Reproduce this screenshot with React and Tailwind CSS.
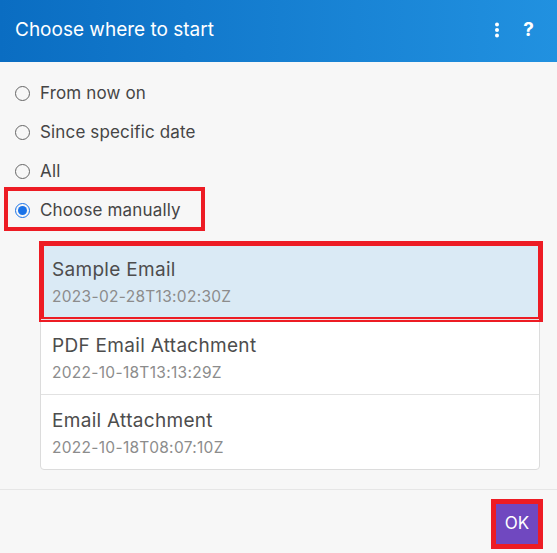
import { useState } from "react";

const options = ["From now on", "Since specific date", "All", "Choose manually"];

const items = [
  { title: "Sample Email", date: "2023-02-28T13:02:30Z" },
  { title: "PDF Email Attachment", date: "2022-10-18T13:13:29Z" },
  { title: "Email Attachment", date: "2022-10-18T08:07:10Z" },
];

const App = () => {
  const [choice, setChoice] = useState(3);
  const [picked, setPicked] = useState(0);

  return (
    <div
      className="w-[557px] h-[553px] bg-[#f7f7f7] flex flex-col overflow-hidden"
      style={{ fontFamily: "Inter, 'Noto Sans', sans-serif" }}
    >
      {/* Header */}
      <div className="h-[62px] shrink-0 flex items-center justify-between pl-[15px] pr-[23px] bg-gradient-to-r from-[#0a6dc2] to-[#2191e0] text-white">
        <h1 className="text-[19px] font-normal pb-[2px]">Choose where to start</h1>
        <div className="flex items-center gap-[23px] pb-[3px]">
          <svg width="6" height="16" viewBox="0 0 6 16" fill="white">
            <circle cx="3" cy="2.5" r="2" />
            <circle cx="3" cy="8" r="2" />
            <circle cx="3" cy="13.5" r="2" />
          </svg>
          <span className="text-[19px] font-bold leading-none">?</span>
        </div>
      </div>

      {/* Options */}
      <div className="pt-[12px] flex flex-col">
        {options.map((label, i) => (
          <div key={label} className="relative h-[39px] flex items-center">
            <label
              className="flex items-center gap-[10px] pl-[15px] cursor-pointer text-[17px] tracking-[0.15px] text-[#454545]"
              onClick={() => setChoice(i)}
            >
              {choice === i ? (
                <span className="w-[15px] h-[15px] rounded-full border-[1.5px] border-[#1a73e8] flex items-center justify-center">
                  <span className="w-[9px] h-[9px] rounded-full bg-[#1a73e8]" />
                </span>
              ) : (
                <span className="w-[15px] h-[15px] rounded-full border-[1.5px] border-[#666]" />
              )}
              {label}
            </label>
            {i === 3 && (
              <div className="absolute left-[4px] top-[-4px] w-[201px] h-[44px] border-[4px] border-[#ed1c24] pointer-events-none" />
            )}
          </div>
        ))}
      </div>

      {/* Items */}
      {choice === 3 && (
        <div className="ml-[40px] mt-[13px] w-[500px] bg-white border border-[#dcdcdc] rounded-[4px]">
          {items.map((item, i) => (
            <div
              key={item.title}
              onClick={() => setPicked(i)}
              className={`relative h-[75px] pl-[11px] pt-[13px] cursor-pointer ${
                i > 0 ? "border-t border-[#e2e2e2]" : ""
              } ${picked === i ? "bg-[#daeaf5]" : ""}`}
            >
              <div className="text-[19px] leading-[25px] tracking-[0.3px] text-[#4d4d4d]">{item.title}</div>
              <div className="text-[15.5px] leading-[20px] mt-[5px] tracking-[0.3px] text-[#8c8c8c]">{item.date}</div>
              {i === 0 && (
                <div className="absolute left-[-2px] top-[-3px] w-[504px] h-[81px] border-[5px] border-[#ed1c24] pointer-events-none" />
              )}
            </div>
          ))}
        </div>
      )}

      {/* Footer */}
      <div className="mt-auto h-[64px] border-t border-[#e6e6e6] flex justify-end items-start pt-[14px] pr-[19px]">
        <div className="relative">
          <button className="w-[42px] h-[40px] bg-[#7048c0] text-white text-[17px]">OK</button>
          <div className="absolute left-[-5px] top-[-5px] w-[52px] h-[50px] border-[5px] border-[#ed1c24] pointer-events-none" />
        </div>
      </div>
    </div>
  );
};

export default App;
